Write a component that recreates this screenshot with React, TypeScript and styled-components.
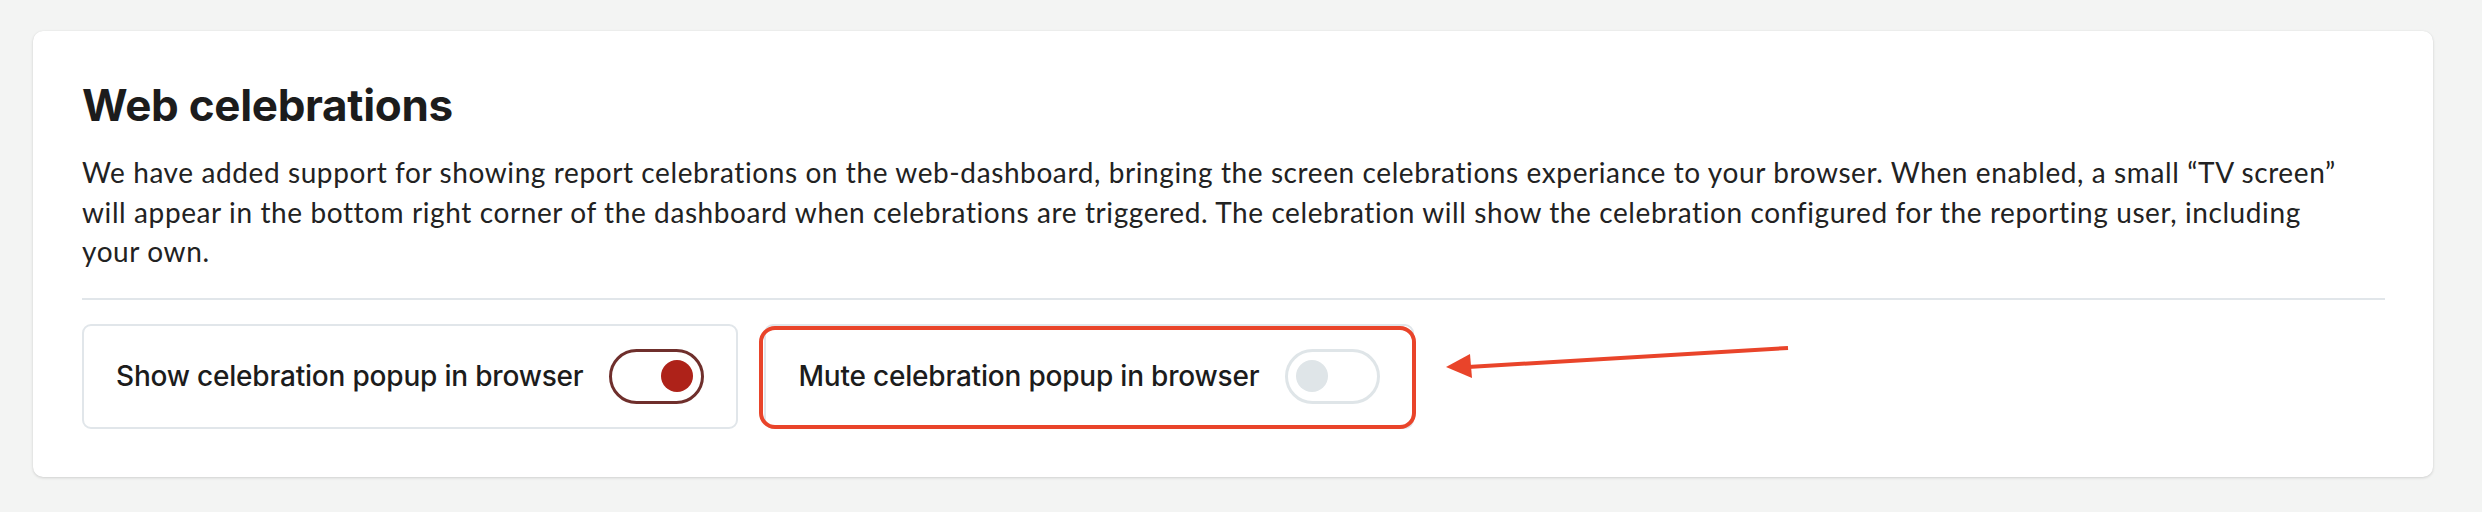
import { createGlobalStyle, styled } from "styled-components";

const colors = {
  page: "#f3f4f3",
  white: "#ffffff",
  text: "#1c1c1c",
  border: "#e1e6ea",
  onBorder: "#6f2f2c",
  onKnob: "#ae2219",
  offBorder: "#dfe5e8",
  offKnob: "#dfe5e8",
  annotation: "#e9442a",
};

const GlobalStyle = createGlobalStyle`
  html, body {
    margin: 0;
    padding: 0;
    background: ${colors.page};
  }

  body {
    font-family: Inter, "Liberation Sans", sans-serif;
    color: ${colors.text};
  }
`;

interface ToggleProps {
  label: string;
  checked?: boolean;
  highlighted?: boolean;
}

const ToggleCard = ({ label, checked = false, highlighted = false }: ToggleProps) => {
  return (
    <Option>
      <OptionLabel>{label}</OptionLabel>
      <Switch $checked={checked}>
        <Knob $checked={checked} />
      </Switch>
      {highlighted && <Highlight />}
    </Option>
  );
};

const Arrow = () => (
  <ArrowSvg width="350" height="60" viewBox="0 0 350 60">
    <line
      x1="26"
      y1="21"
      x2="346"
      y2="2"
      stroke={colors.annotation}
      strokeWidth="4"
    />
    <polygon points="4,21 28,8 30,32" fill={colors.annotation} />
  </ArrowSvg>
);

const App = () => {
  return (
    <>
      <GlobalStyle />
      <Page>
        <Card>
          <Title>Web celebrations</Title>
          <Description>
            We have added support for showing report celebrations on the
            web-dashboard, bringing the screen celebrations experiance to your
            browser. When enabled, a small “TV screen”
            <br />
            will appear in the bottom right corner of the dashboard when
            celebrations are triggered. The celebration will show the
            celebration configured for the reporting user, including
            <br />
            your own.
          </Description>
          <Divider />
          <Options>
            <ToggleCard label="Show celebration popup in browser" checked />
            <ToggleCard label="Mute celebration popup in browser" highlighted />
            <Arrow />
          </Options>
        </Card>
      </Page>
    </>
  );
};

const Page = styled.div`
  padding: 31px 49px 32px 33px;
`;

const Card = styled.div`
  padding: 48px 48px 48px 49px;

  border-radius: 10px;

  background-color: ${colors.white};
  box-shadow: 0 1px 3px rgba(0, 0, 0, 0.14), 0 0 1px rgba(0, 0, 0, 0.08);
`;

const Title = styled.h1`
  margin: 0;

  font-size: 44px;
  line-height: 52px;
  font-weight: 700;
  letter-spacing: -0.3px;
`;

const Description = styled.p`
  margin: 22px 0 0;

  font-family: Lato, Inter, sans-serif;
  font-size: 28px;
  line-height: 39.5px;
  font-weight: 400;
  letter-spacing: 0.6px;
  color: #222222;
  white-space: nowrap;
`;

const Divider = styled.hr`
  margin: 26px 0 0;

  height: 2px;
  border: none;

  background-color: ${colors.border};
`;

const Options = styled.div`
  display: flex;
  align-items: center;
  gap: 26px;

  margin-top: 24px;
`;

const Option = styled.div`
  position: relative;

  display: flex;
  align-items: center;
  gap: 26px;

  padding: 23px 32px 23px 32px;

  border: 2px solid ${colors.border};
  border-radius: 9px;

  background-color: ${colors.white};
`;

const OptionLabel = styled.span`
  font-size: 28px;
  font-weight: 500;
  line-height: 34px;
  white-space: nowrap;
  letter-spacing: -0.2px;
`;

const Switch = styled.div<{ $checked: boolean }>`
  display: flex;
  align-items: center;
  justify-content: ${({ $checked }) => ($checked ? "flex-end" : "flex-start")};

  box-sizing: border-box;
  width: 95px;
  height: 55px;

  padding: 0 8px;

  border: 3px solid
    ${({ $checked }) => ($checked ? colors.onBorder : colors.offBorder)};
  border-radius: 28px;

  background-color: ${colors.white};
`;

const Knob = styled.span<{ $checked: boolean }>`
  width: 32px;
  height: 32px;

  border-radius: 50%;

  background-color: ${({ $checked }) =>
    $checked ? colors.onKnob : colors.offKnob};
`;

const Highlight = styled.div`
  position: absolute;
  top: 0;
  left: -7px;
  right: -4px;
  bottom: -2px;

  border: 4px solid ${colors.annotation};
  border-radius: 16px;

  pointer-events: none;
`;

const ArrowSvg = styled.svg`
  flex-shrink: 0;
  margin-left: 2px;
`;

export default App;
